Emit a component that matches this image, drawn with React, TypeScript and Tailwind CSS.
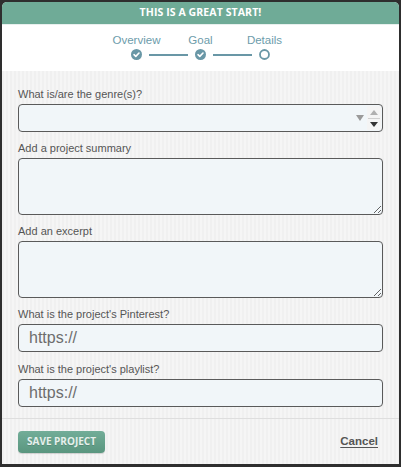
import React from 'react';

const labelCls = "block text-[11px] leading-[13px] text-[#555] mb-[3px]";
const fieldCls =
  "block w-full rounded-[4px] border border-[#5a5a5a] bg-[#f1f6f9] outline-none";

const StepDot: React.FC<{ done?: boolean }> = ({ done }) =>
  done ? (
    <svg width="11" height="11" viewBox="0 0 11 11">
      <circle cx="5.5" cy="5.5" r="5.5" fill="#6997a6" />
      <path d="M3 5.7 L4.8 7.4 L8 4" stroke="#fff" strokeWidth="1.6" fill="none" strokeLinecap="round" strokeLinejoin="round" />
    </svg>
  ) : (
    <svg width="11" height="11" viewBox="0 0 11 11">
      <circle cx="5.5" cy="5.5" r="4.5" fill="none" stroke="#6997a6" strokeWidth="1.8" />
    </svg>
  );

const Line = () => <div className="mx-[7px] h-[2px] w-[39px] bg-[#6997a6]" />;

const App: React.FC = () => {
  return (
    <div
      className="h-[467px] w-[401px] bg-[#2e2e2e] pt-[2px] pl-[2px] pr-[2px] pb-[3px]"
      style={{ fontFamily: '"Liberation Sans", Arial, sans-serif' }}
    >
      <div className="flex h-full flex-col overflow-hidden rounded-t-[5px] bg-[#f2f2f2]">
        {/* header */}
        <div
          className="flex h-[22px] items-center justify-center bg-[#6fab97] text-[10.5px] font-bold tracking-[0.1px] text-white"
          style={{ fontFamily: '"Open Sans", sans-serif' }}
        >
          THIS IS A GREAT START!
        </div>

        {/* stepper */}
        <div className="h-[47px] border-t border-[#e8f0ee] bg-white pt-[8px]">
          <div className="flex justify-center text-[11.5px] leading-[14px] text-[#6d9cab]">
            <div className="w-16 text-center">Overview</div>
            <div className="w-16 text-center">Goal</div>
            <div className="w-16 text-center">Details</div>
          </div>
          <div className="mt-[2px] flex items-center justify-center">
            <StepDot done />
            <Line />
            <StepDot done />
            <Line />
            <StepDot />
          </div>
        </div>

        {/* form body */}
        <div className="flex-1 border-b border-[#dedede] px-[16px] pt-[17px] bg-[repeating-linear-gradient(90deg,#f0f0f0_0px,#f0f0f0_2px,#f5f5f5_2px,#f5f5f5_4px)]">
          <label className={labelCls}>What is/are the genre(s)?</label>
          <div className={`${fieldCls} relative h-[28px]`}>
            <svg className="absolute left-[337px] top-[10px]" width="8" height="6" viewBox="0 0 8 6">
              <path d="M0 0 H8 L4 6 Z" fill="#9a9a9a" />
            </svg>
            <div className="absolute right-[1px] top-[1px] flex h-[24px] w-[14px] flex-col items-center justify-center bg-[#f4f4f4]">
              <svg width="8" height="5" viewBox="0 0 8 5">
                <path d="M0 5 H8 L4 0 Z" fill="#b0b0b0" />
              </svg>
              <div className="my-[3px] h-px w-[12px] bg-[#cfcfcf]" />
              <svg width="8" height="5" viewBox="0 0 8 5">
                <path d="M0 0 H8 L4 5 Z" fill="#333" />
              </svg>
            </div>
          </div>

          <label className={`${labelCls} mt-[10px]`}>Add a project summary</label>
          <textarea className={`${fieldCls} h-[57px] resize-y`} />

          <label className={`${labelCls} mt-[10px]`}>Add an excerpt</label>
          <textarea className={`${fieldCls} h-[57px] resize-y`} />

          <label className={`${labelCls} mt-[10px]`}>What is the project's Pinterest?</label>
          <input
            className={`${fieldCls} h-[28px] px-[10px] text-[16px] placeholder:text-[#6d6d6d]`}
            placeholder="https://"
          />

          <label className={`${labelCls} mt-[11px]`}>What is the project's playlist?</label>
          <input
            className={`${fieldCls} h-[28px] px-[10px] text-[16px] placeholder:text-[#6d6d6d]`}
            placeholder="https://"
          />
        </div>

        {/* footer */}
        <div className="flex h-[45px] items-center justify-between pl-[16px] pr-[21px] bg-[repeating-linear-gradient(90deg,#f0f0f0_0px,#f0f0f0_2px,#f5f5f5_2px,#f5f5f5_4px)]">
          <button
            className="h-[22px] w-[87px] rounded-[4px] bg-gradient-to-b from-[#72ad98] to-[#5a967f] text-[10px] font-bold text-[#e6f0ec] shadow-[0_1px_1px_rgba(0,0,0,0.15)]"
            style={{ fontFamily: '"Open Sans", sans-serif', textShadow: '0 1px 0 rgba(0,0,0,0.15)' }}
          >
            SAVE PROJECT
          </button>
          <a className="text-[11.5px] font-bold text-[#555] underline underline-offset-2" href="#">
            Cancel
          </a>
        </div>
      </div>
    </div>
  );
};

export default App;
